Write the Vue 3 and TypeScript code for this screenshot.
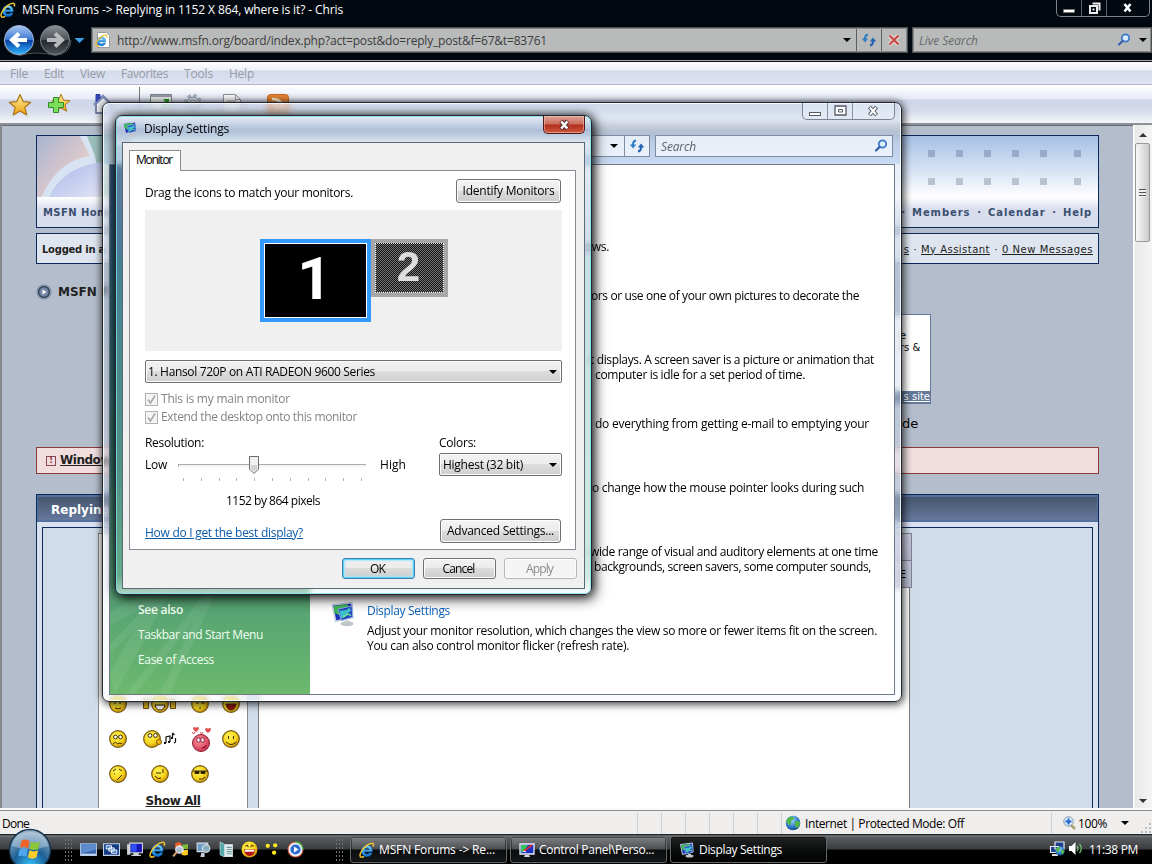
<script setup lang="ts">
interface Label { text: string; w: number }
interface Fragment extends Label { x: number }

/* Spreads a label over the given width in pixels by adjusting its tracking. */
const vFit = {
  mounted(el: HTMLElement, binding: { value: number }) {
    const range = document.createRange()
    range.selectNodeContents(el)
    const natural = range.getBoundingClientRect().width
    const count = (el.textContent ?? '').length || 1
    el.style.letterSpacing = `${(binding.value - natural) / count}px`
  },
}

const menus: Label[] = [
  { text: 'File', w: 18 }, { text: 'Edit', w: 20 }, { text: 'View', w: 25 },
  { text: 'Favorites', w: 47 }, { text: 'Tools', w: 29 }, { text: 'Help', w: 25 },
]
const descriptions: Fragment[] = [
  { text: 'ows.', w: 24, x: 0 },
  { text: 'ors or use one of your own pictures to decorate the', w: 268, x: 6 },
  { text: 't displays. A screen saver is a picture or animation that', w: 284, x: 5 },
  { text: 'computer is idle for a set period of time.', w: 210, x: 10 },
  { text: 'do everything from getting e-mail to emptying your', w: 274, x: 10 },
  { text: 'o change how the mouse pointer looks during such', w: 272, x: 7 },
  { text: 'wide range of visual and auditory elements at one time', w: 288, x: 5 },
  { text: 'backgrounds, screen savers, some computer sounds,', w: 277, x: 9 },
]
const ticks = [5, 23, 41, 58, 76, 94, 112, 130, 147, 165, 183]
const dots = [894, 922, 950, 978, 1006, 1040]
const quickLaunch = ['desk', 'switch', 'pc', 'ie', 'flagsearch', 'net', 'notebook', 'grin', 'dots', 'play']
const tasks = [
  { icon: 'ie', text: 'MSFN Forums -> Re...', w: 116, active: false },
  { icon: 'person', text: 'Control Panel\\Perso...', w: 115, active: false },
  { icon: 'display', text: 'Display Settings', w: 83, active: true },
]
</script>

<template>
  <div class="desktop">
    <svg class="defs" width="0" height="0">
      <defs>
        <linearGradient id="gIe" x1="0" y1="0" x2="0" y2="1"><stop offset="0" stop-color="#7fdcff" /><stop offset="1" stop-color="#0a6fd0" /></linearGradient>
        <linearGradient id="gStar" x1="0" y1="0" x2="0" y2="1"><stop offset="0" stop-color="#fff0a0" /><stop offset="1" stop-color="#f0a010" /></linearGradient>
        <linearGradient id="gBlue" x1="0" y1="0" x2="0" y2="1"><stop offset="0" stop-color="#a9c9f4" /><stop offset=".48" stop-color="#3f7ad2" /><stop offset=".52" stop-color="#0b3fa4" /><stop offset="1" stop-color="#2fb6ff" /></linearGradient>
        <linearGradient id="gGray" x1="0" y1="0" x2="0" y2="1"><stop offset="0" stop-color="#8d9297" /><stop offset=".5" stop-color="#4a4f55" /><stop offset=".52" stop-color="#22272c" /><stop offset="1" stop-color="#50565c" /></linearGradient>
        <radialGradient id="gSmile" cx=".4" cy=".35" r=".7"><stop offset="0" stop-color="#fff45c" /><stop offset=".6" stop-color="#f7d51b" /><stop offset="1" stop-color="#c98a08" /></radialGradient>
        <radialGradient id="gPink" cx=".4" cy=".35" r=".7"><stop offset="0" stop-color="#ff9aa5" /><stop offset="1" stop-color="#cc2c48" /></radialGradient>
        <radialGradient id="gOrb" cx=".5" cy=".9" r=".9"><stop offset="0" stop-color="#35c8ff" /><stop offset=".45" stop-color="#1a5f96" /><stop offset="1" stop-color="#9fb8cc" /></radialGradient>
        <radialGradient id="gGlobe" cx=".4" cy=".3" r=".8"><stop offset="0" stop-color="#a8dcff" /><stop offset=".6" stop-color="#2a78c8" /><stop offset="1" stop-color="#0d3c7c" /></radialGradient>
      </defs>
      <symbol id="ie" viewBox="0 0 16 16">
        <path d="M13.300 9.700H5.400c.1 1.700 1.300 2.400 2.700 2.400 1.100 0 1.800-.4 2.300-1.100h2.600c-.7 2.200-2.500 3.600-5 3.600C4.700 14.600 2.600 12.300 2.600 9.100S4.700 3.500 8 3.500c3.400 0 5.400 2.300 5.300 6.200zM5.500 7.800h5C10.200 6.400 9.300 5.700 8 5.700S5.800 6.400 5.500 7.800z" fill="url(#gIe)" stroke="#0d6bc0" stroke-width=".5" />
        <path d="M14.200 4.500c.8-1.900.3-3.200-1-3.300C10 1 4.700 5.200 2.300 9.500.7 12.400.4 15.100 2.400 15.200c.8 0 1.700-.3 2.700-.9" fill="none" stroke="#f2c232" stroke-width="1.500" />
      </symbol>
      <symbol id="display" viewBox="0 0 16 16">
        <path d="M1.500 2.500l12-1.500.5 9-10.500 2.500z" fill="#1f35b8" stroke="#c3cedd" /><path d="M2.500 3l8-1 2 3-4 1-2 3-4-2z" fill="#3cba58" /><path d="M5 5l8.500-2 .5 7-7 2z" fill="#2440c4" stroke="#8fb4e6" stroke-width=".6" /><path d="M6 6l4-.5 2-1.500 1 2-4 3-2 2z" fill="#3ec2d0" /><path d="M8 10l3-2 2 1" stroke="#6ae08a" fill="none" /><path d="M9 12h3v1.500H9z" fill="#c7ccd4" /><ellipse cx="10.500" cy="14" rx="4" ry="1.500" fill="#c0c5cc" />
      </symbol>
      <symbol id="person" viewBox="0 0 16 16">
        <path d="M1 2h14v10H1z" fill="#1d2fc0" stroke="#eef" stroke-width="1.300" /><path d="M2 3h7L5 9l-3 2z" fill="#39c460" /><path d="M5 9l8-6" stroke="#e23030" stroke-width="1.600" /><path d="M4 9l3 1" stroke="#fff" /><path d="M6 13h4l1 2H5z" fill="#d5d8dc" />
      </symbol>
      <symbol id="desk" viewBox="0 0 16 16"><path d="M.5 2.500h15v11H.5z" fill="#3a68b0" stroke="#a9bfe0" /><path d="M1 3h14v5L1 12z" fill="#5f8ccc" /><path d="M1 12h14v1.500H1z" fill="#c9dcf4" /></symbol>
      <symbol id="switch" viewBox="0 0 16 16"><path d="M.5 2.500h15v11H.5z" fill="#123b84" stroke="#c2d2ea" /><path d="M3 4.500h5v3H3zM5.500 6.500h5v3h-5zM8 8.500h5v3H8z" fill="#2a6ac0" stroke="#fff" stroke-width=".9" /></symbol>
      <symbol id="pc" viewBox="0 0 16 16"><path d="M3.500 2h12v9h-12z" fill="#1717b8" stroke="#d4d6da" /><path d="M5 3h5v7H5z" fill="#2e50ff" /><path d="M1 3h3v10H1zM7 11h5v2h2v1H5v-1h2z" fill="#d0d3d8" /></symbol>
      <symbol id="flagsearch" viewBox="0 0 16 16"><path d="M3 2q4-2 6 .5V7Q6 5 3 7z" fill="#ee5a28" /><path d="M10 3q2 1 5-.5V7q-3 1-5 0z" fill="#7ac031" /><path d="M9 8q3 1 6 0v5q-3 1.500-6 0z" fill="#ffc61e" /><circle cx="7" cy="8" r="3.500" fill="#cfe8ffcc" stroke="#dfe4ee" stroke-width="1.200" /><path d="M4.500 10.500L1 14.500" stroke="#d8a468" stroke-width="2" /></symbol>
      <symbol id="net" viewBox="0 0 16 16"><path d="M2 2h10v8H2z" fill="#6e9ec8" stroke="#d4dde8" /><circle cx="10.500" cy="7" r="3.500" fill="#89aebf" stroke="#dfe7ea" /><path d="M6 11h3v4H5z" fill="#c7cdd4" /></symbol>
      <symbol id="notebook" viewBox="0 0 16 16"><path d="M2 1l4 2v12l-4-2z" fill="#4ea6a8" stroke="#d3f0ef" stroke-width=".6" /><path d="M6 3h8v12H6z" fill="#e6eff0" /><path d="M8 6h5M8 8h5M8 10h5M8 12h5" stroke="#6e9ea0" /></symbol>
      <symbol id="grin" viewBox="0 0 16 16"><circle cx="8" cy="8" r="7.500" fill="url(#gSmile)" /><path d="M2.500 8h11q-1 6-5.500 6T2.500 8z" fill="#b01414" /><path d="M3.500 8.300h9v1.800h-9z" fill="#fff" /><path d="M4 5l2-1 1 2M9 6l1-2 2 1" stroke="#6a3c00" fill="none" /></symbol>
      <symbol id="dots" viewBox="0 0 16 16"><g fill="#ffec20"><circle cx="3.500" cy="4.500" r="2" /><circle cx="10.500" cy="4" r="2" /><circle cx="9.500" cy="11" r="2" /></g></symbol>
      <symbol id="play" viewBox="0 0 16 16"><circle cx="8" cy="8" r="7" fill="#eef3fb" stroke="#d25a3c" /><path d="M8 1a7 7 0 0 1 7 7" stroke="#48b04c" fill="none" stroke-width="1.500" /><circle cx="8" cy="8" r="4.800" fill="#2b6bd0" /><path d="M6.500 5.200v5.600L11 8z" fill="#fff" /></symbol>
      <symbol id="globe" viewBox="0 0 16 16"><circle cx="8" cy="8" r="7.300" fill="url(#gGlobe)" /><path d="M3 3q4-3 6 0-1 3-3 3 1 3-2 4-2-2-3-4zM10 7q3-2 5 0 0 4-3 6-3-2-2-6z" fill="#4fb748" /></symbol>
      <symbol id="refresh" viewBox="0 0 16 16"><path d="M7 2.500Q3.700 3 4 7.500" fill="none" stroke="#2f7cc4" stroke-width="2" /><path d="M.8 6.500h6.400L4 10.500z" fill="#2f7cc4" /><path d="M9 13.500q3.300-.5 3-5" fill="none" stroke="#2361b4" stroke-width="2" /><path d="M8.800 9.500h6.400L12 5.500z" fill="#2361b4" /></symbol>
      <symbol id="lens" viewBox="0 0 16 16"><circle cx="9.500" cy="6" r="3.700" fill="#d8ecfd" stroke="#3f78c4" stroke-width="1.800" /><path d="M6.500 9L3 12.500" stroke="#345fae" stroke-width="2.200" stroke-linecap="round" /></symbol>
      <symbol id="star" viewBox="0 0 24 24"><path d="M12 1.500l3.100 7.100 7.600.7-5.800 5 1.800 7.600L12 17.900 5.300 21.900l1.800-7.600-5.800-5 7.600-.7z" fill="url(#gStar)" stroke="#a8731a" stroke-width="1.200" stroke-linejoin="round" /></symbol>
      <symbol id="ball" viewBox="0 0 18 18"><circle cx="9" cy="9" r="8.300" fill="url(#gSmile)" stroke="#75580e" stroke-width="1.200" /></symbol>
      <symbol id="flag" viewBox="0 0 24 24"><path d="M5 4q4-2 7 .5L10.800 11Q7 9 3.500 10.500z" fill="#f0642c" /><path d="M13.300 5q4 2 8 0L19.800 11.500q-4 2-7.700 0z" fill="#8cc63a" /><path d="M3.200 12q4-2 7.300 0L9.200 18.500Q6 16.500 1.800 18.300z" fill="#4fa6ee" /><path d="M11.900 12.700q4 2 7.700 0l-1.400 6.500q-4 2-7.500 0z" fill="#ffcd2a" /></symbol>
    </svg>

    <main class="browser">
      <header class="titlebar">
        <svg class="i16"><use href="#ie" /></svg>
        <span v-fit="321" class="cap">MSFN Forums -&gt; Replying in 1152 X 864, where is it? - Chris</span>
        <div class="darkctl">
          <i><svg width="12" height="14"><path d="M.5 8.500h11v3H.5z" fill="#fff" stroke="#777" /></svg></i>
          <i><svg width="13" height="14"><path d="M4.500 2.500h7v7M2 5h7v7H2z" fill="none" stroke="#eee" stroke-width="2" /><path d="M4.500 7.500h2v2h-2z" fill="#eee" /></svg></i>
          <i class="wide"><svg width="12" height="14"><path d="M2.500 3l6 7.500M8.500 3l-6 7.500" stroke="#fff" stroke-width="2.600" /></svg></i>
        </div>
      </header>
      <nav class="navrow">
        <svg class="travel" width="90" height="38">
          <path d="M4 18Q4 32 20 33.500 28 31 37 31 46 31 55 33.500 71 32 71 18" fill="#11161b" stroke="#4a4f54" />
          <circle cx="19" cy="18" r="14.500" fill="url(#gBlue)" stroke="#9db4d4" /><path d="M27 18H13M19 11.500L12 18l7 6.500" fill="none" stroke="#fff" stroke-width="4" />
          <circle cx="55" cy="18" r="14.500" fill="url(#gGray)" stroke="#7f858a" /><path d="M47 18h14M55 11.500l7 6.500-7 6.500" fill="none" stroke="#b7babd" stroke-width="4" />
          <path d="M74.500 16h10L79.500 21z" fill="#3f9fe6" />
        </svg>
        <div class="address">
          <svg width="16" height="18" class="page"><path d="M2.500 1.500h9l3 3v12h-12z" fill="#fff" stroke="#999" /><use href="#ie" x="0" y="3" width="13" height="13" /></svg>
          <span v-fit="430" class="url">http://www.msfn.org/board/index.php?act=post&amp;do=reply_post&amp;f=67&amp;t=83761</span>
          <b class="caret"></b>
          <i class="cell"><svg class="i16"><use href="#refresh" /></svg></i>
          <i class="cell"><svg width="14" height="14"><path d="M2.500 2.500l9 9M11.500 2.500l-9 9" stroke="#f4dede" stroke-width="4" /><path d="M2.500 2.500l9 9M11.500 2.500l-9 9" stroke="#c44c4a" stroke-width="2.400" /></svg></i>
        </div>
        <div class="live"><span v-fit="59">Live Search</span><svg class="i16"><use href="#lens" /></svg><b class="caret"></b></div>
      </nav>
      <div class="menubar"><span v-for="m in menus" :key="m.text" v-fit="m.w">{{ m.text }}</span></div>
      <div class="toolbar">
        <svg width="310" height="36">
          <use href="#star" x="8" y="8" width="24" height="24" /><use href="#star" x="51" y="8" width="20" height="20" />
          <path d="M53 13h5v5h5v5h-5v5h-5v-5h-5v-5h5z" transform="translate(.5 -.5)" fill="#7cdc5c" stroke="#2f8f26" />
          <path d="M96 19l7-7 8 7v9H96v-9" fill="#f4f6fa" stroke="#5a6692" stroke-width="1.500" /><path d="M94 20l9-9 9 9" stroke="#7d8bb8" stroke-width="2.500" fill="none" /><path d="M96 17V9.500h4v4" fill="#3847b8" stroke="#2c3a9c" />
          <path d="M139.500 2v30" stroke="#777" />
          <path d="M150.500 9.500h21v16h-21z" fill="#eef2ee" stroke="#788" /><path d="M151 10h20v2h-20z" fill="#99a" /><path d="M163 14h6v6l-2-2-3 3-2-2 3-3z" fill="#26a020" />
          <circle cx="193" cy="18" r="7.500" fill="none" stroke="#a5b0be" stroke-width="3" stroke-dasharray="3.500 2.400" /><circle cx="193" cy="18" r="6" fill="#d0dae6" stroke="#8a97a8" /><circle cx="193" cy="18" r="3" fill="#eef1f8" stroke="#8a97a8" />
          <path d="M223.500 9.500h12l5 5v15h-17z" fill="#fafafa" stroke="#8d9098" /><path d="M235.500 9.500v5h5M227 16h9M227 19h9" stroke="#999" fill="none" /><path d="M240 17h5l-2.500 3z" fill="#555" />
          <rect x="267.500" y="9.500" width="21" height="20" rx="3" fill="#e88435" stroke="#c86820" /><path d="M272 14q11 0 12 12M272 19q6 1 7 7" fill="none" stroke="#fff3dd" stroke-width="2.500" />
        </svg>
      </div>
      <div class="viewport">
        <div class="page-body">
          <section class="banner">
            <div class="art">
              <svg width="205" height="61"><defs><linearGradient id="a1" x2="1" y2="1"><stop offset="0" stop-color="#a9b4cf" /><stop offset=".6" stop-color="#dcc9cc" /><stop offset="1" stop-color="#eadada" /></linearGradient><linearGradient id="a2" y2="1"><stop offset="0" stop-color="#a5b8e8" /><stop offset="1" stop-color="#e3e4f6" /></linearGradient></defs>
                <path d="M0 0h43q8 10 10 20Q20 25 5 61H0z" fill="url(#a1)" /><path d="M43 0h25v61H5Q20 25 53 20z" fill="#d7e2f2" /><path d="M50 0h155v61H66L58 20z" fill="#9cc0bc" /><path d="M12 61Q26 31 65 26V61z" fill="url(#a2)" />
              </svg>
              <i v-for="d in dots" :key="d" class="dot" :style="{ left: d - 3 + 'px' }"></i>
              <i v-for="d in dots" :key="-d" class="dot low" :style="{ left: d - 3 + 'px' }"></i>
            </div>
            <div class="links"><span v-fit="72">MSFN Home</span><p><em>·</em><span v-fit="58.500">Members</span><em>·</em><span v-fit="57.500">Calendar</span><em>·</em><span v-fit="29">Help</span></p></div>
          </section>
          <section class="member"><span v-fit="63">Logged in a</span><p><u>s</u><em>·</em><u v-fit="69">My Assistant</u><em>·</em><u v-fit="91">0 New Messages</u></p></section>
          <div class="crumb"><svg width="17" height="17"><circle cx="8" cy="8" r="7" fill="#3e4d68" stroke="#8f9bb0" stroke-width="1.500" /><circle cx="8" cy="8" r="4.500" fill="#7787a6" /><path d="M6.500 5.500v5l4-2.500z" fill="#fff" /></svg><span>MSFN F</span></div>
          <div class="sponsor"><span>e<br />rs &amp;</span><u>s site</u></div>
          <p class="sponsor-note">de</p>
          <div class="warning"><i>!</i><u v-fit="51">Window</u></div>
          <section class="reply">
            <h2>Replying in</h2>
            <div class="reply-in">
              <aside class="smilies">
                <div class="grid">
                  <svg width="150" height="205">
                    <use v-for="(p, k) in [[10, 49], [52, 49], [92, 49], [123, 49], [10, 84], [44, 84], [123, 84], [10, 119], [52, 119], [92, 119]]" :key="k" href="#ball" :x="p[0]" :y="p[1]" width="18" height="18" />
                    <g fill="none" stroke="#3b2a00" stroke-width="1">
                      <path d="M16 56v2M21 56v2M16 62q3 2 6 0" /><path d="M56 59h10q-1 5-5 5t-5-5z" fill="#fff" /><path d="M97 57h3M102 57h4M100 62h2" /><path d="M127 58h10q-1 6-5 6t-5-6z" fill="#991111" />
                      <circle cx="16.500" cy="91" r="1.900" fill="#fff" /><circle cx="21.500" cy="91" r="1.900" fill="#fff" /><path d="M14 98l2.500-2 2 2 2.500-1 2 1" /><circle cx="51" cy="89.500" r="1.900" fill="#fff" /><circle cx="56.500" cy="89.500" r="1.900" fill="#fff" />
                      <path d="M129.500 90v3M134.500 90v3M127 96q5 5 10.500 0" /><path d="M14 125l3-2M15 128h1M20 123l3 2M18 134l5-5" /><path d="M57 127h5M64 123v4M56 130q3 4 6 2" /><path d="M94 125h15" /><path d="M96 125.500h4v2h-4zM102 125.500h4v2h-4z" fill="#201600" /><path d="M100 133q4 1 6-2" />
                    </g>
                    <circle cx="60" cy="96" r="2.500" fill="#f0b414" stroke="#8a6010" /><circle cx="102" cy="97" r="8.500" fill="url(#gPink)" stroke="#8c2036" /><path d="M98 92h3v4h-3zM102 92h3v4h-3z" fill="#fff" stroke="#702" stroke-width=".7" /><path d="M103 102q4 0 4-3" stroke="#702" fill="none" />
                    <path d="M94 82q2-2 3 0 2-2 3 0 0 2-3 4-3-2-3-4zM106 83q2-2 3 0 2-2 3 0 0 2-3 4-3-2-3-4z" fill="#e04c4c" /><path d="M93 86l1.500 2 1.500-2M101 86l1.500 2 1.500-2" stroke="#e04c4c" fill="none" />
                    <path d="M67 97v-6l4-1v6M73.500 87v5M73.500 87l2 2M76.500 92v4l-1.500 1" fill="none" stroke="#111" stroke-width="1.200" /><path d="M65 96h2v2h-2zM69 95h2v2h-2zM72 91h2v2h-2z" fill="#111" /><path d="M44.500 53.500h5v9h-5zM71.500 53.500h5v9h-5z" fill="#e0b820" stroke="#6d500c" />
                  </svg>
                </div>
                <u v-fit="55">Show All</u>
              </aside>
              <div class="editor"><i class="tool"></i><i class="tool second">E</i><div class="sheet"></div></div>
            </div>
          </section>
        </div>
        <div class="scroll"><i class="up"></i><div class="thumb"><i></i></div><i class="down"></i></div>
      </div>
      <footer class="status">
        <span v-fit="27" class="done">Done</span>
        <i v-for="n in 6" :key="n" class="pane"></i>
        <div class="zone"><svg class="i16"><use href="#globe" /></svg><span v-fit="159">Internet | Protected Mode: Off</span></div>
        <div class="zoom"><svg width="13" height="14"><path d="M7.500 8.500L12 13" stroke="#aaa06c" stroke-width="2.500" /><circle cx="5.500" cy="5.500" r="4.700" fill="#dceeff" stroke="#7c93ac" /><path d="M5.500 2.500v6M2.500 5.500h6" stroke="#2264c8" stroke-width="2" /></svg><span v-fit="29">100%</span><b class="caret"></b></div>
        <svg class="grip" width="12" height="12"><g fill="#bbb"><path d="M9 1h2v2H9zM9 5h2v2H9zM9 9h2v2H9zM5 5h2v2H5zM5 9h2v2H5zM1 9h2v2H1z" /></g></svg>
      </footer>
    </main>

    <section class="glass panel-window">
      <div class="lightctl">
        <i><svg width="12" height="12"><rect x=".5" y="7.500" width="11" height="3" fill="#fff" stroke="#555a66" /></svg></i>
        <i><svg width="13" height="12"><path d="M1 1h11v9H1z" fill="#fff" stroke="#555a66" stroke-width="1.300" /><path d="M4.500 4.500h4v2.500h-4z" fill="#fff" stroke="#555a66" /></svg></i>
        <i class="wide"><svg width="13" height="12"><path d="M2.500 2l7 8M9.500 2l-7 8" stroke="#555a66" stroke-width="4" /><path d="M3 2.500l6 7M9 2.500l-6 7" stroke="#fff" stroke-width="2" /></svg></i>
      </div>
      <div class="pathrow"><div class="path"><b class="caret"></b><i><svg class="i16"><use href="#refresh" /></svg></i></div><div class="find"><span v-fit="35">Search</span><svg class="i16"><use href="#lens" /></svg></div></div>
      <div class="client">
        <aside>
          <svg class="rays" width="200" height="130"><g fill="#fff" opacity=".07"><path d="M0 62L110 0H85L0 48zM5 130L75 0H62L0 108zM25 130L130 0h-12L16 130zM0 90L90 0H78L0 80zM60 130L118 0h-8L50 130z" /></g></svg>
          <b v-fit="45">See also</b><span v-fit="125">Taskbar and Start Menu</span><span v-fit="76">Ease of Access</span>
        </aside>
        <div class="tasks-list">
          <div class="fragments"><p v-for="d in descriptions" :key="d.text" :style="{ marginLeft: d.x + 'px' }"><span v-fit="d.w">{{ d.text }}</span></p></div>
          <article><svg width="26" height="26"><use href="#display" /></svg><div><a v-fit="83">Display Settings</a><span v-fit="510">Adjust your monitor resolution, which changes the view so more or fewer items fit on the screen.</span><span v-fit="262">You can also control monitor flicker (refresh rate).</span></div></article>
        </div>
      </div>
    </section>

    <section class="glass dialog">
      <header><svg class="i16"><use href="#display" /></svg><span v-fit="85">Display Settings</span><i class="close"><svg width="13" height="12"><path d="M3 2l6.500 8M9.500 2L3 10" stroke="#5c3030" stroke-width="4.500" /><path d="M3.300 2.500l6 7M9.300 2.500l-6 7" stroke="#fff" stroke-width="2.500" /></svg></i></header>
      <div class="dlg-client">
        <div class="tab"><span v-fit="36">Monitor</span></div>
        <div class="sheet-panel">
          <div class="row drag"><span v-fit="208">Drag the icons to match your monitors.</span><button><span v-fit="92">Identify Monitors</span></button></div>
          <div class="canvas"><div class="mon one">1</div><div class="mon two">2</div></div>
          <div class="select"><span v-fit="227">1. Hansol 720P on ATI RADEON 9600 Series</span><b class="caret"></b></div>
          <label class="check first"><i><svg width="9" height="9"><path d="M1 4.500L3.500 8 8 .5" fill="none" stroke="#aaa" stroke-width="1.700" /></svg></i><span v-fit="129">This is my main monitor</span></label>
          <label class="check"><i><svg width="9" height="9"><path d="M1 4.500L3.500 8 8 .5" fill="none" stroke="#aaa" stroke-width="1.700" /></svg></i><span v-fit="196">Extend the desktop onto this monitor</span></label>
          <div class="settings">
            <div class="res">
              <span v-fit="59">Resolution:</span>
              <div class="sliderow"><span v-fit="22">Low</span>
                <svg width="190" height="30"><path d="M0 7.500h188M.5 7v3" stroke="#aaadaf" /><path d="M1 8.500h187v1H1z" fill="#e7eaea" /><path d="M71.500 -.5h9v12.500l-4.500 4.500-4.500-4.500z" fill="#f1f1f1" stroke="#6c6c6c" /><path d="M73 8h6v3.500l-3 3-3-3z" fill="#d2d2d2" /><path v-for="t in ticks" :key="t" :d="`M${t + .5} 21v3`" stroke="#b5b5b5" /></svg>
                <span v-fit="26">High</span></div>
              <span v-fit="94" class="pixels">1152 by 864 pixels</span>
            </div>
            <div class="colors"><span v-fit="37">Colors:</span><div class="select"><span v-fit="80">Highest (32 bit)</span><b class="caret"></b></div></div>
          </div>
          <div class="row help"><a v-fit="158">How do I get the best display?</a><button><span v-fit="107">Advanced Settings...</span></button></div>
        </div>
        <div class="actions"><button class="ok"><span v-fit="15">OK</span></button><button><span v-fit="32">Cancel</span></button><button class="off"><span v-fit="27">Apply</span></button></div>
      </div>
    </section>

    <div class="taskbar">
      <svg class="orb" width="44" height="36"><circle cx="22" cy="21" r="20.500" fill="url(#gOrb)" stroke="#15324a" stroke-width="1.500" /><path d="M4 17Q7 3 22 3t18 14Q22 24 4 17z" fill="#fff" opacity=".3" /><use href="#flag" x="8" y="7" width="27" height="27" /></svg>
      <i class="handle"></i>
      <div class="quick"><svg v-for="q in quickLaunch" :key="q" width="17" height="17"><use :href="'#' + q" /></svg></div>
      <i class="handle second"></i>
      <div class="buttons"><div v-for="t in tasks" :key="t.text" class="task" :class="{ active: t.active }"><svg class="i16"><use :href="'#' + t.icon" /></svg><span v-fit="t.w">{{ t.text }}</span></div></div>
      <div class="tray">
        <svg width="34" height="18"><path d="M6 1h9v7H6zM1.500 5.500h8v6h-8z" fill="#1c3f8c" stroke="#e4eaf4" stroke-width="1.200" /><path d="M3 14h6" stroke="#ddd" stroke-width="2" /><use href="#globe" x="6" y="5" width="10" height="10" /><path d="M20 5h2.500l4-4v13l-4-4H20z" fill="#fff" /><path d="M28 5q2 2.500 0 5M30.500 3q3.500 4.500 0 9" fill="none" stroke="#72c472" stroke-width="1.300" /></svg>
        <span v-fit="49">11:38 PM</span>
      </div>
    </div>
  </div>
</template>

<style>
html, body { margin: 0; overflow: hidden; }
</style>

<style scoped>
* { box-sizing: border-box; }
.desktop { position: relative; width: 1152px; height: 864px; overflow: hidden; font: 12px/15px "Open Sans", "Noto Sans", sans-serif; color: #000; background: #000; }
.desktop p, .desktop h2 { margin: 0; }
.desktop i, .desktop em { font-style: normal; }
.desktop span, .desktop a, .desktop u { white-space: nowrap; flex: none; }
.defs { position: absolute; }
svg { display: block; flex: none; overflow: visible; }
.i16 { width: 16px; height: 16px; }
.caret { width: 0; height: 0; border: 4px solid transparent; border-top-color: #000; border-bottom: 0; flex: none; }

.browser { display: flex; flex-direction: column; height: 834px; }
.titlebar { display: flex; align-items: center; height: 22px; padding: 0 2px 3px 0; background: #02080f; color: #fff; gap: 6px; }
.darkctl { display: flex; height: 17px; margin: -3px 0 0 auto; border: 1px solid #7e8388; border-top: 0; border-radius: 0 0 5px 5px; }
.darkctl i { width: 25px; display: flex; align-items: center; justify-content: center; border-right: 1px solid #5d6268; }
.darkctl .wide { width: 42px; border: 0; }
.navrow { display: flex; height: 40px; padding: 0; background: #02080f; border-bottom: 1px solid #0a0f14; box-shadow: inset 0 -1px #a2a5a8; }
.travel { margin-right: 1px; }
.address, .live { display: flex; flex: none; align-items: center; height: 26px; margin-top: 5px; border: 2px solid #4b5055; outline: 1px solid #85888b; outline-offset: -2px; background: #b9bbbb; }
.address { width: 817px; padding-left: 2px; color: #3c3c3c; }
.page { margin-right: 6px; }
.address .caret { margin-left: auto; margin-right: 5px; }
.cell { display: flex; width: 25px; height: 22px; align-items: center; justify-content: center; border-left: 1px solid #5d6062; }
.live { width: 240px; margin-left: 4px; padding: 0 3px 0 5px; font-style: italic; color: #66696b; }
.live svg { margin-left: auto; margin-right: 7px; }
.menubar { display: flex; align-items: center; gap: 16px; height: 23px; padding: 1px 10px 0; color: #989ba3; background: linear-gradient(#fff, #eef1f9 8px, #d4daed 9px, #dfe4f3); border-bottom: 1px solid #b2b6c8; }
.toolbar { height: 38px; background: linear-gradient(#fff, #e7ebf6 14px, #cdd4e8 15px, #d4daeb 25px, #f4f6fb); }
.viewport { display: flex; height: 687px; border-top: 2px solid #8e9198; border-left: 2px solid #85888d; background: #efefef; }
.page-body { width: 1131px; height: 685px; overflow: hidden; padding: 9px 34px 0 34px; background: #b4bdcc; font-family: "DejaVu Sans", sans-serif; font-size: 10px; border-top: 1px solid #686b70; }
.banner { height: 93px; border: 1px solid #0a2a5e; }
.art { position: relative; height: 61px; background: linear-gradient(#a7c0e4, #d0def2 30px, #fff); }
.dot { position: absolute; top: 14px; width: 7px; height: 7px; background: #97abc9; }
.dot.low { top: 42px; background: #bac2cf; }
.links { display: flex; justify-content: space-between; align-items: center; height: 30px; padding: 0 6px; background: linear-gradient(#fff, #d9dfee 12px, #d7dcec); font-weight: bold; color: #3a4f70; }
.links p, .member p { display: flex; }
.links em { width: 17.5px; text-align: center; }
.member { display: flex; align-items: center; justify-content: space-between; height: 31px; margin-top: 5px; padding: 1px 5px 0; border: 1px solid #0a2a5e; background: #dfe5ef; color: #222; }
.member > span { font-weight: bold; }
.member em { width: 12px; text-align: center; }
.crumb { display: flex; align-items: center; gap: 5px; height: 20px; margin-top: 18px; font-weight: bold; font-size: 12px; color: #222; }
.sponsor { display: flex; flex-direction: column; align-items: flex-end; width: 201px; height: 90px; margin: 12px 0 0 694px; padding-top: 15px; background: #fff; border: 1px solid #64799a; line-height: 12px; }
.sponsor span { width: 31px; padding-left: 1px; }
.sponsor u { width: 100%; margin-top: auto; text-align: right; color: #fff; background: #64799a; }
.sponsor-note { height: 20px; padding: 10px 0 0 866px; font-size: 13px; line-height: 20px; }
.warning { display: flex; align-items: center; gap: 4px; height: 27px; margin-top: 23px; padding-left: 9px; border: 1px solid #8d3a3a; background: #f1dddd; font-weight: bold; font-size: 12px; color: #222; }
.warning i { width: 10px; height: 10px; border: 1px solid #864a50; font-size: 8px; line-height: 8px; text-align: center; color: #84323c; }
.reply { height: 330px; margin-top: 20px; border: 1px solid #0a2a5e; border-bottom: 0; background: #d9e0f0; }
.reply h2 { height: 27px; padding-left: 13px; font-size: 12px; line-height: 26px; color: #fff; background: linear-gradient(#47566f, #66799c); border: 1px solid #55709c; border-bottom-width: 2px; border-top-width: 2px; }
.reply-in { display: flex; margin: 5px; height: 300px; border: 1px solid #0a2a5e; background: #d0dce9; padding-left: 55px; }
.smilies { display: flex; flex-direction: column; align-items: center; width: 150px; margin-top: 5px; border: 1px solid #888; background: #fff; }
.smilies .grid { height: 260px; width: 148px; padding-top: 112px; }
.smilies u { font-weight: bold; font-size: 12px; color: #222; }
.editor { position: relative; width: 652px; margin: 5px 0 0 10px; }
.sheet { height: 300px; margin-top: 55px; background: #fff; border-left: 1px solid #777; border-right: 1px solid #777; }
.tool { position: absolute; right: -2px; top: 0; width: 80px; height: 28px; border: 1px solid #7d8090; background: linear-gradient(135deg, #e8e9f2, #b8bbd2); text-align: right; padding-right: 5px; line-height: 28px; }
.tool.second { top: 27px; }
.scroll { display: flex; flex-direction: column; align-items: center; width: 19px; background: linear-gradient(90deg, #fff 1px, #e9e9e9 2px, #f4f4f4); }
.up, .down { width: 0; height: 0; border: 4px solid transparent; border-bottom: 4px solid #333; border-top: 0; margin-top: 8px; }
.thumb { display: flex; align-items: center; justify-content: center; width: 15px; height: 99px; margin-top: 6px; border: 1px solid #999; border-radius: 2px; background: linear-gradient(90deg, #f7f7f7, #e4e4e6 45%, #c9cacd); }
.thumb i { width: 7px; height: 8px; background: repeating-linear-gradient(#555 0 1px, #eee 1px 3px); }
.down { margin-top: auto; margin-bottom: 7px; border-top: 4px solid #333; border-bottom: 0; }
.status { display: flex; align-items: center; height: 24px; border-top: 1px solid #8c8c8c; box-shadow: 0 -2px #fafafa; background: #f0eded; padding: 1px 0 0 2px; position: relative; }
.done { width: 635px; padding-top: 1px; }
.pane { width: 24px; height: 21px; border-left: 1px solid #cfcfcf; }
.zone { display: flex; align-items: center; gap: 4px; width: 270px; height: 21px; padding-left: 3px; border-left: 1px solid #cfcfcf; }
.zone span { padding-top: 1px; }
.zoom { display: flex; align-items: center; height: 21px; gap: 2px; padding-left: 11px; border-left: 1px solid #cfcfcf; }
.zoom .caret { margin-left: 12px; }
.grip { margin-left: auto; margin-top: 9px; }

.glass { position: absolute; border: 1px solid #23282e; border-radius: 7px; backdrop-filter: blur(3px); }
.panel-window { left: 102px; top: 102px; width: 800px; height: 600px; padding: 0 6px; background: linear-gradient(#d0daed99, #dee6f499 22px, #c2cddd99 28px, #c5d9f3b0 60px, #f3f8fdaa 62px, #b4c8e055 180px, #f4f8ff77); box-shadow: inset 0 0 0 1px #fffc, 0 0 9px #000a, 2px 3px 8px #0006; }
.lightctl { display: flex; width: 93px; height: 17px; margin-left: auto; border: 1px solid #7b8391; border-top: 0; border-radius: 0 0 5px 5px; background: #eef2f966; }
.lightctl i { display: flex; align-items: center; justify-content: center; width: 25px; border-right: 1px solid #8c94a2; }
.lightctl .wide { width: 41px; border: 0; }
.pathrow { display: flex; justify-content: flex-end; gap: 5px; height: 22px; margin: 15px 2px 7px 10px; }
.path, .find { display: flex; flex: none; align-items: center; height: 22px; border: 1px solid #7f8ba0; background: #f2f6fcd0; }
.path { width: 520px; justify-content: flex-end; gap: 6px; }
.path i { height: 20px; padding: 2px 4px; border-left: 1px solid #7f8ba0; }
.find { width: 238px; padding: 0 3px 0 5px; font-style: italic; color: #5d6066; justify-content: space-between; }
.client { display: flex; height: 531px; border: 1px solid #70798a; background: #fff; }
.client aside { position: relative; display: flex; flex: none; flex-direction: column; align-items: flex-start; width: 200px; padding: 437px 0 0 28px; gap: 10px; color: #effff0; background: linear-gradient(#31557c, #2c6478 110px, #357068 300px, #59a573 450px, #6cb96d); }
.client aside b { font-weight: 600; white-space: nowrap; }
.rays { position: absolute; left: 0; top: 399px; overflow: hidden; }
.tasks-list { flex: 1; overflow: hidden; }
.fragments { display: grid; grid-template-rows: 49px 64px 15px 49px 64px 64px 15px 44px; padding: 74px 0 0 275px; }
article { display: flex; gap: 11px; padding-left: 20px; }
article > svg { margin-top: -2px; }
article div { display: flex; flex-direction: column; align-items: flex-start; }
article a { color: #0b62b8; margin-bottom: 5px; }

.dialog { left: 115px; top: 115px; width: 477px; height: 480px; padding: 0 6px; background: linear-gradient(#e6edf7cc, #a8bdd8b0 14px, #dce6f2b0 28px, #b6cee455 30px, #7ea5cc66 140px, #6fb0bb66 141px, #84ccb066 460px, #f2fbff99); box-shadow: inset 0 0 0 1px #7fe0eecc, 0 0 10px #000c, 3px 4px 14px #000a; }
.dialog header { display: flex; height: 26px; align-items: center; gap: 6px; color: #000; }
.dialog header > span { padding-bottom: 1px; }
.close { display: flex; align-items: center; justify-content: center; align-self: flex-start; width: 42px; height: 18px; margin-left: auto; border: 1px solid #4c1c1c; border-top: 0; border-radius: 0 0 5px 5px; background: linear-gradient(#e0a498, #cc6a5a 8px, #b02c1c 9px, #d05c40); box-shadow: inset 0 0 0 1px #f3c4b888; }
.dlg-client { height: 447px; border: 1px solid #5c6a76; background: #f0f0f0; padding: 7px 8px 0 6px; }
.tab { position: relative; width: 52px; height: 21px; padding: 1px 6px 0; border: 1px solid #898c95; border-bottom: 0; background: #fff; z-index: 1; }
.sheet-panel { height: 380px; margin-top: -1px; padding: 8px 13px 0 15px; border: 1px solid #898c95; background: #fff; }
.row { display: flex; justify-content: space-between; align-items: center; height: 25px; }
button { display: flex; align-items: center; justify-content: center; margin: 0; padding: 0; font: inherit; border: 1px solid #707070; border-radius: 3px; background: linear-gradient(#f3f3f3, #ebebeb 49%, #dcdcdc 50%, #cdcdcd); box-shadow: inset 0 0 0 1px #fcfcfc; }
.sheet-panel button span, .select span, .check span { padding-bottom: 1px; }
.actions button span { padding-right: 2px; }
.drag button { width: 105px; height: 24px; margin: 0 1px 1px 0; }
.drag > span { margin-top: 2px; }
.canvas { position: relative; height: 141px; width: 417px; margin-top: 6px; background: #f0f0f0; }
.mon { position: absolute; font-weight: bold; display: flex; align-items: center; justify-content: center; }
.one { left: 115px; top: 29px; width: 111px; height: 83px; padding: 0 2px 3px 0; background: #000; color: #fff; border: 4px solid #3399ff; box-shadow: inset 0 0 0 1px #fff; font-family: Roboto, sans-serif; font-size: 60px; line-height: 60px; }
.two { left: 226px; top: 29px; width: 77px; height: 58px; padding: 0 2px 3px 0; border: 4px solid #a7a7a7; font-family: "Liberation Sans", Arial, sans-serif; font-size: 42px; color: #dedede; background: repeating-conic-gradient(#111 0 25%, #777 0 50%) 0 0 / 2px 2px; outline: 1px dotted #eee; outline-offset: -5px; }
.select { display: flex; align-items: center; justify-content: space-between; height: 23px; margin-top: 9px; width: 417px; padding: 0 4px 0 2px; border: 1px solid #707070; border-radius: 2px; background: linear-gradient(#f2f2f2, #ebebeb 49%, #dddddd 50%, #cfcfcf); box-shadow: inset 0 0 0 1px #fcfcfc; }
.check { display: flex; align-items: center; gap: 3px; height: 18px; color: #838383; }
.check.first { margin-top: 7px; }
.check i { display: flex; align-items: center; justify-content: center; width: 13px; height: 13px; border: 1px solid #b1b1b1; background: #f4f4f4; }
.settings { display: flex; margin-top: 9px; }
.res { display: flex; flex-direction: column; align-items: flex-start; width: 294px; height: 83px; }
.sliderow { display: flex; height: 36px; margin-top: 7px; }
.sliderow span { line-height: 16px; }
.sliderow svg { margin: 0 12px 0 11px; }
.pixels { margin: 0 0 0 81px; }
.colors .select { width: 123px; margin-top: 3px; padding-left: 3px; }
.help a { color: #0c5ba8; text-decoration: underline; margin-top: 4px; }
.help button { width: 121px; height: 24px; margin-right: 1px; }
.actions { display: flex; justify-content: flex-end; gap: 8px; margin: 8px -1px 0 0; }
.actions button { width: 73px; height: 21px; }
.actions .ok { border-color: #3c7fb1; box-shadow: inset 0 0 0 1px #5cd0f4, inset 0 0 2px 2px #a9e5f7; }
.actions .off { border-color: #b4b7b9; background: #f4f4f4; color: #8c8c8c; }

.taskbar { position: relative; display: flex; align-items: center; height: 30px; background: linear-gradient(#303234, #85888b 1px, #5a5d60 2px, #3a3c3e 14px, #020303 15px, #000); border-top: 1px solid #24272a; color: #fff; }
.orb { margin: -5px 0 0 8px; }
.handle { width: 9px; height: 23px; margin-left: 12px; background: radial-gradient(circle, #6e7072 1px, transparent 1px) 0 0 / 3px 4px; }
.quick { display: flex; gap: 6px; margin-left: 7px; }
.handle.second { margin-left: 31px; }
.buttons { display: flex; gap: 3px; margin-left: 6px; }
.task { display: flex; align-items: center; gap: 4px; width: 157px; height: 27px; padding-left: 8px; border: 1px solid #66696c; border-radius: 3px; background: linear-gradient(#808386, #4c4e50 12px, #0b0c0d 13px, #16181a); box-shadow: inset 0 0 0 1px #0006; }
.task span { padding-bottom: 1px; }
.task.active span { padding-bottom: 0; }
.task.active { background: linear-gradient(#222426, #080909 60%, #030303); }
.tray { display: flex; align-items: center; gap: 6px; margin-left: auto; padding-right: 14px; }
</style>
